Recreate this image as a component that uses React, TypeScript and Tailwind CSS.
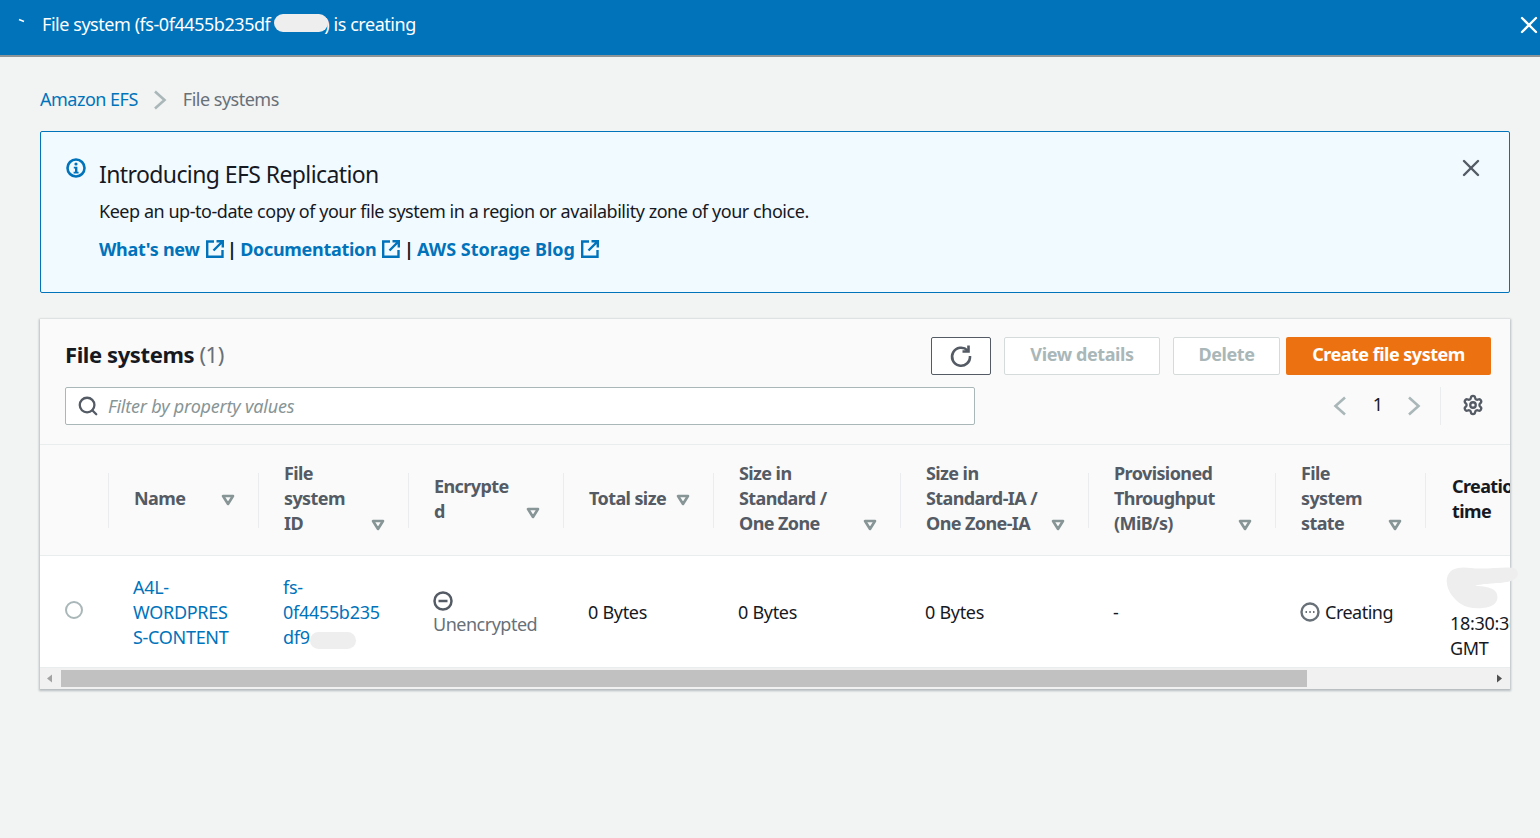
import { Search, Settings, X } from 'lucide-react';

const font = "[font-family:'Noto_Sans',sans-serif]";

const columns = [
  { w: 'w-[150px]', lines: ['Name'] },
  { w: 'w-[150px]', lines: ['File', 'system', 'ID'] },
  { w: 'w-[155px]', lines: ['Encrypte', 'd'] },
  { w: 'w-[150px]', lines: ['Total size'] },
  { w: 'w-[187px]', lines: ['Size in', 'Standard /', 'One Zone'] },
  { w: 'w-[188px]', lines: ['Size in', 'Standard-IA /', 'One Zone-IA'] },
  { w: 'w-[187px]', lines: ['Provisioned', 'Throughput', '(MiB/s)'] },
  { w: 'w-[150px]', lines: ['File', 'system', 'state'] },
];

function FilterArrow() {
  return (
    <svg width="14" height="12" viewBox="0 0 14 12" className="shrink-0">
      <path d="M2 2h10L7 10z" fill="none" stroke="#879596" strokeWidth="2.600" strokeLinejoin="round" />
    </svg>
  );
}

function External() {
  return (
    <svg width="18" height="18" viewBox="0 0 18 18" fill="none" stroke="#0073bb" strokeWidth="2.400" className="shrink-0">
      <path d="M8 1.500H1.200v15.300H16.500V10" />
      <path d="M10.500 1.200h6.300v6.300M16.500 1.500 7.500 10.500" />
    </svg>
  );
}

function Chevron({ left = false, color = '#aab7b8' }: { left?: boolean; color?: string }) {
  return (
    <svg width="14" height="20" viewBox="0 0 14 20" fill="none" stroke={color} strokeWidth="2.600">
      <path d={left ? 'M12 1.500 2.500 10l9.500 8.500' : 'M2 1.500 11.500 10 2 18.500'} />
    </svg>
  );
}

export default function App() {
  return (
    <div className={`h-[838px] w-[1540px] overflow-hidden bg-[#f2f3f3] ${font} text-[#16191f]`}>
      {/* flash banner */}
      <div className="flex h-[57px] items-center overflow-hidden border-b-2 border-[#8d9599] bg-[#0073bb] pb-[6px] pl-[18px] text-white">
        <svg width="8" height="6" viewBox="0 0 8 6" className="mb-[8px] mr-[16px]">
          <path d="M1 1.500 6 3.500" stroke="#fff" strokeWidth="1.500" />
        </svg>
        <span className="relative text-[18px] tracking-[-0.45px]">
          File system (fs-0f4455b235df<span className="inline-block w-[54px]" />) is creating
          <span className="absolute left-[232px] top-[3px] h-[18px] w-[54px] rounded-full bg-[#eeeeee]" />
        </span>
        <X className="-mr-[3px] ml-auto" size={28} strokeWidth={2} />
      </div>

      <main className="pl-[40px] pr-[30px]">
        {/* breadcrumbs */}
        <div className="flex h-[74px] items-center pt-[10px] text-[18px] tracking-[-0.5px]">
          <span className="text-[#0073bb]">Amazon EFS</span>
          <span className="mx-[15.500px] mt-[2px] flex"><Chevron color="#aab7b8" /></span>
          <span className="text-[#687078]">File systems</span>
        </div>

        {/* info alert */}
        <div className="flex h-[162px] rounded-[2px] border border-[#0073bb] bg-[#f1faff] pl-[25px] pr-[24px] pt-[26px]">
          <svg width="20" height="20" viewBox="0 0 20 20" className="mr-[13px] shrink-0">
            <circle cx="10" cy="10" r="8.500" fill="none" stroke="#0073bb" strokeWidth="2.600" />
            <circle cx="10" cy="6" r="1.600" fill="#0073bb" />
            <path d="M7.800 8.800h3.600v5h1.200v1.700H7.600v-1.700H9v-3.300H7.800z" fill="#0073bb" />
          </svg>
          <div className="flex-1">
            <div className="text-[23px] leading-[32px] tracking-[-0.6px]">Introducing EFS Replication</div>
            <div className="mt-[9px] text-[18px] leading-[24px] tracking-[-0.46px]">
              Keep an up-to-date copy of your file system in a region or availability zone of your choice.
            </div>
            <div className="mt-[14px] flex items-center text-[18px] font-bold leading-[24px] tracking-[-0.3px]">
              <span className="text-[#0073bb]">What's new</span>
              <span className="ml-[6px]"><External /></span>
              <span className="mx-[3.500px]">|</span>
              <span className="text-[#0073bb]">Documentation</span>
              <span className="ml-[6px]"><External /></span>
              <span className="mx-[3.500px]">|</span>
              <span className="tracking-[0px] text-[#0073bb]">AWS Storage Blog</span>
              <span className="ml-[6px]"><External /></span>
            </div>
          </div>
          <X className="-mt-[4px] text-[#545b64]" size={28} strokeWidth={2.100} />
        </div>

        {/* table card */}
        <div className="mt-[26px] w-[1470px] bg-white shadow-[0_1px_2px_1px_rgba(0,28,36,0.25)]">
          <div className="h-[126px] border-b border-[#eaeded] bg-[#fafafa] pl-[25px] pr-[19px] pt-[18px]">
            <div className="flex h-[38px] items-center">
              <h2 className="pb-[3px] text-[22px] font-bold tracking-[-0.4px]">
                File systems <span className="font-normal text-[#687078]">(1)</span>
              </h2>
              <button className="ml-auto flex h-[38px] w-[60px] items-center justify-center rounded-[2px] border border-[#545b64] bg-white">
                <svg width="24" height="24" viewBox="0 0 24 24" fill="none" stroke="#545b64" strokeWidth="2.600">
                  <path d="M18.500 6.500A9 9 0 1 0 21 12" />
                  <path d="M19.500 1.500v6h-6" />
                </svg>
              </button>
              <button className="ml-[13px] h-[38px] w-[156px] rounded-[2px] border border-[#d5dbdb] bg-white pb-[3px] text-[18px] font-bold tracking-[-0.4px] text-[#aab7b8]">
                View details
              </button>
              <button className="ml-[13px] h-[38px] w-[107px] rounded-[2px] border border-[#d5dbdb] bg-white pb-[3px] text-[18px] font-bold tracking-[-0.4px] text-[#aab7b8]">
                Delete
              </button>
              <button className="ml-[6px] h-[38px] w-[205px] rounded-[2px] bg-[#ec7211] pb-[3px] text-[18px] font-bold tracking-[-0.5px] text-white">
                Create file system
              </button>
            </div>
            <div className="mt-[12px] flex h-[38px] items-center">
              <div className="flex h-[38px] w-[910px] items-center rounded-[2px] border border-[#aab7b8] bg-white pl-[11px]">
                <Search size={22} strokeWidth={2.500} className="text-[#545b64]" />
                <span className="ml-[9px] text-[18px] italic tracking-[-0.2px] text-[#879596]">Filter by property values</span>
              </div>
              <div className="ml-auto flex items-center">
                <Chevron left />
                <span className="ml-[26px] mr-[24px] pb-[3px] text-[18px]">1</span>
                <Chevron />
                <div className="ml-[19px] h-[38px] w-px bg-[#eaeded]" />
                <Settings size={22} strokeWidth={2.500} className="mb-[2px] ml-[21px] mr-[7px] text-[#545b64]" />
              </div>
            </div>
          </div>

          {/* column headers */}
          <div className="flex h-[111px] border-b border-[#eaeded] bg-[#fafafa] text-[18px] font-bold leading-[25px] tracking-[-0.6px] text-[#545b64]">
            <div className="w-[68px] shrink-0" />
            {columns.map((c, i) => (
              <div key={i} className={`${c.w} flex shrink-0 items-center py-[16px]`}>
                <div className="flex h-[55px] w-full items-center border-l border-[#eaeded] pl-[25px] pr-[23px]">
                  <div className="flex flex-1 items-end pb-[3px]">
                    <div className="flex-1">
                      {c.lines.map((l) => (
                        <div key={l}>{l}</div>
                      ))}
                    </div>
                    <span className="mb-[5px]"><FilterArrow /></span>
                  </div>
                </div>
              </div>
            ))}
            <div className="flex h-full flex-1 items-center overflow-hidden py-[16px]">
              <div className="flex h-[55px] w-full items-center border-l border-[#eaeded] pb-[3px] pl-[26px] text-[#16191f]">
                <div className="whitespace-nowrap">
                  <div>Creation</div>
                  <div>time</div>
                </div>
              </div>
            </div>
          </div>

          {/* row */}
          <div className="relative flex h-[111px] bg-white pt-[1px] text-[18px] leading-[25px] tracking-[-0.3px]">
            <div className="flex w-[68px] items-center pb-[4px] pl-[25px]">
              <div className="h-[18px] w-[18px] rounded-full border-2 border-[#aab7b8]" />
            </div>
            <div className="flex w-[150px] items-center pl-[25px] text-[#0073bb]">
              <div>A4L-<br />WORDPRES<br />S-CONTENT</div>
            </div>
            <div className="flex w-[150px] items-center pl-[25px] text-[#0073bb]">
              <div>fs-<br />0f4455b235<br />df9</div>
            </div>
            <div className="flex w-[155px] flex-col justify-center pl-[25px] pt-[3px] tracking-[-0.5px] text-[#687078]">
              <svg width="20" height="20" viewBox="0 0 20 20" fill="none" stroke="#545b64" strokeWidth="2.500" className="mb-[1px]">
                <circle cx="10" cy="10" r="8.500" />
                <path d="M5.500 10h9" />
              </svg>
              <div>Unencrypted</div>
            </div>
            <div className="flex w-[150px] items-center pl-[25px]">0 Bytes</div>
            <div className="flex w-[187px] items-center pl-[25px]">0 Bytes</div>
            <div className="flex w-[188px] items-center pl-[25px]">0 Bytes</div>
            <div className="flex w-[187px] items-center pl-[25px]">-</div>
            <div className="flex w-[150px] items-center pl-[25px] tracking-[-0.5px]">
              <svg width="20" height="20" viewBox="0 0 20 20" fill="none" stroke="#687078" strokeWidth="2.400" className="mr-[5px]">
                <circle cx="10" cy="10" r="8.500" />
                <path d="M5.500 10h1.500M9.300 10h1.500M13 10h1.500" strokeWidth="2" />
              </svg>
              Creating
            </div>
            <div className="flex flex-1 items-center overflow-hidden whitespace-nowrap pb-[3px] pl-[25px]">
              <div>
                <div className="h-[25px]" />
                <div className="h-[25px]" />
                <div>18:30:36</div>
                <div>GMT</div>
              </div>
            </div>
            {/* redaction smudges */}
            <svg width="76" height="48" viewBox="0 0 76 48" className="absolute left-[1403px] top-[10px]">
              <path d="M4 12C6 3 14 0 28 2c14 2 34-2 43 0 6 3 5 10-3 13-10 3-30 2-36 5 8 0 20 1 22 8 2 8-3 13-14 14-8 1-16 0-22-4C12 34 2 24 4 12z" fill="#eeeeee" />
            </svg>
            <span className="absolute left-[270px] top-[76px] h-[17px] w-[46px] rounded-full bg-[#eeeeee]" />
          </div>

          {/* horizontal scrollbar */}
          <div className="flex h-[22px] items-center bg-[#f1f1f1] shadow-[inset_0_1px_0_#eaeded]">
            <svg width="21" height="21" viewBox="0 0 21 21"><path d="M12 6.500v8l-5-4z" fill="#a3a3a3" /></svg>
            <div className="h-[17px] w-[1246px] bg-[#c1c1c1]" />
            <svg width="21" height="21" viewBox="0 0 21 21" className="ml-auto"><path d="M8 6.500v8l5-4z" fill="#505050" /></svg>
          </div>
        </div>
      </main>
    </div>
  );
}
